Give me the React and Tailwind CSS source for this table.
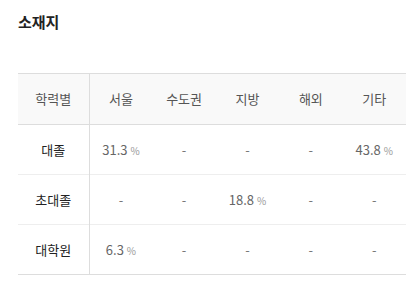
const cols = ['서울', '수도권', '지방', '해외', '기타'];

const rows = [
  { label: '대졸', values: ['31.3', null, null, null, '43.8'] },
  { label: '초대졸', values: [null, null, '18.8', null, null] },
  { label: '대학원', values: ['6.3', null, null, null, null] },
];

function Cell({ value }) {
  if (!value) return <span className="text-[#777]">-</span>;
  return (
    <span className="text-[#666]">
      {value} <span className="text-[10px] text-[#999]">%</span>
    </span>
  );
}

export default function App() {
  return (
    <div
      className="w-[420px] h-[282px] bg-white px-[18px] pt-[11px]"
      style={{ fontFamily: '"Noto Sans CJK KR", "Noto Sans", sans-serif' }}
    >
      <h2 className="text-[15px] font-bold text-[#222] leading-[22px]">소재지</h2>
      <table className="mt-[40px] w-[388px] table-fixed border-collapse text-[13px]">
        <colgroup>
          <col className="w-[71px]" />
          {cols.map((c) => (
            <col key={c} />
          ))}
        </colgroup>
        <thead>
          <tr className="h-[51px] bg-[#f9f9f9] border-t border-b border-[#ddd]">
            <th className="font-normal text-[#555] border-r border-[#ddd]">학력별</th>
            {cols.map((c) => (
              <th key={c} className="font-normal text-[#555]">{c}</th>
            ))}
          </tr>
        </thead>
        <tbody>
          {rows.map((r, i) => (
            <tr
              key={r.label}
              className={`h-[50px] border-b ${i === rows.length - 1 ? 'border-[#ddd]' : 'border-[#eee]'}`}
            >
              <td className="text-center text-[#222] border-r border-[#ddd]">{r.label}</td>
              {r.values.map((v, j) => (
                <td key={j} className="text-center">
                  <Cell value={v} />
                </td>
              ))}
            </tr>
          ))}
        </tbody>
      </table>
    </div>
  );
}
